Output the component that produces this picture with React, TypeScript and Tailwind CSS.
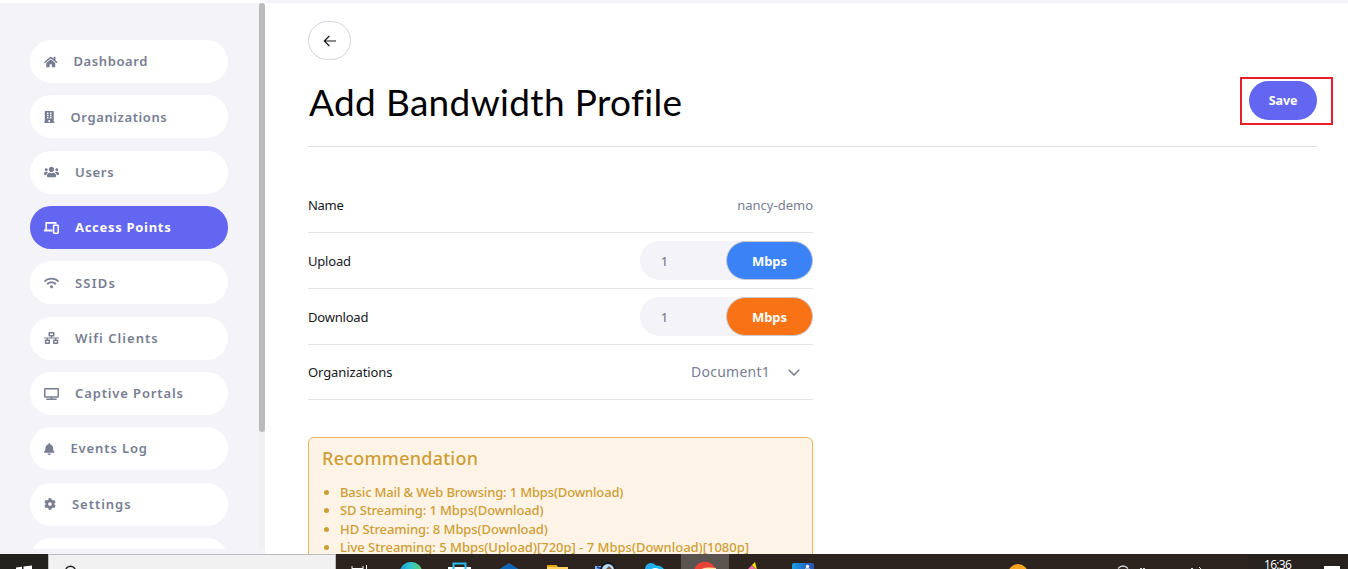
import type { ComponentType, ReactNode } from 'react';
import { FaHome, FaBuilding, FaUsers, FaWifi, FaNetworkWired, FaTv, FaBell, FaCog } from 'react-icons/fa';

function DevicesIcon({ className }: { className?: string }) {
  return (
    <svg viewBox="0 0 15 12" className={className} fill="none" stroke="currentColor" strokeWidth="1.6">
      <path d="M2.200 8V.9H11.700V2.400" />
      <path d="M0 8.500H8.500" strokeWidth="2" />
      <rect x="9.600" y="3.200" width="4.600" height="8" rx=".6" />
    </svg>
  );
}

type Item = { label: string; Icon: ComponentType<{ className?: string }>; icon: string; text: string; active?: boolean };

const items: Item[] = [
  { label: 'Dashboard', Icon: FaHome, icon: 'w-[13.5px]', text: 'tracking-[0.6px]' },
  { label: 'Organizations', Icon: FaBuilding, icon: 'w-[10.5px]', text: 'pt-px tracking-[0.6px]' },
  { label: 'Users', Icon: FaUsers, icon: 'w-[15px]', text: 'pt-px tracking-[0.7px]' },
  { label: 'Access Points', Icon: DevicesIcon, icon: 'w-[15px]', text: 'pt-px tracking-[0.7px] font-bold', active: true },
  { label: 'SSIDs', Icon: FaWifi, icon: 'w-[15px]', text: 'pt-px tracking-[1.2px]' },
  { label: 'Wifi Clients', Icon: FaNetworkWired, icon: 'w-[15px]', text: 'pt-px tracking-[1.05px]' },
  { label: 'Captive Portals', Icon: FaTv, icon: 'w-[15px]', text: 'tracking-[0.87px]' },
  { label: 'Events Log', Icon: FaBell, icon: 'w-[10.5px]', text: 'tracking-[0.87px]' },
  { label: 'Settings', Icon: FaCog, icon: 'w-[12px]', text: 'tracking-[0.97px]' },
];

function Sidebar() {
  return (
    <aside className="flex h-full w-[265px] shrink-0 bg-[#f3f3f8]">
      <nav className="flex h-[546px] w-[259px] flex-col gap-[12.35px] overflow-hidden pt-[37px] pl-[30px]">
        {items.map(({ label, Icon, icon, text, active }) => (
          <a
            key={label}
            className={`flex h-[43px] w-[198px] shrink-0 items-center gap-4 rounded-[21px] pl-[14px] text-[13px] font-semibold ${
              active ? 'bg-[#6366f1] text-white' : 'bg-white text-[#777d92]'
            }`}
          >
            <Icon className={`h-3 shrink-0 ${icon}`} />
            <span className={`whitespace-nowrap ${text}`}>{label}</span>
          </a>
        ))}
        <a className="h-[43px] w-[198px] shrink-0 rounded-[21px] bg-white" />
      </nav>
      <div className="h-[546px] w-[6px] bg-[#f1f1f1]">
        <div className="h-[429px] rounded-[3px] bg-[#bbbbbb]" />
      </div>
    </aside>
  );
}

function Row({ label, height, labelClass, children }: { label: string; height: string; labelClass: string; children: ReactNode }) {
  return (
    <div className={`flex items-center justify-between border-b border-[#e4e4e9] ${height}`}>
      <span className={`pt-[2px] text-[13px] text-[#17171c] ${labelClass}`}>{label}</span>
      {children}
    </div>
  );
}

function SpeedField({ color }: { color: string }) {
  return (
    <div className="flex h-[39px] w-[173px] items-start justify-between rounded-full bg-[#f3f3f8]">
      <span className="self-center pt-[2px] pl-[21px] text-[12px] font-medium text-[#777d92]">1</span>
      <span className={`flex h-[39px] w-[87px] items-center justify-center rounded-full border border-[#c8c9cd] pt-[2px] text-[13px] font-bold tracking-[-0.1px] text-white ${color}`}>
        Mbps
      </span>
    </div>
  );
}

function Taskbar() {
  return (
    <footer className="flex h-[15px] shrink-0 overflow-hidden bg-[#2d241f]">
      <div className="w-[48px] bg-[#24221e]">
        <svg className="h-[15px] w-[48px]" viewBox="0 0 48 15" fill="#fff">
          <path d="M16 13.500L22 12.700V16H16ZM23.500 12.500L32 11.500V16H23.500Z" />
        </svg>
      </div>
      <div className="w-[288px] border border-[#bdbdbd] border-b-0 bg-[#f1f1f1]">
        <svg className="h-[14px] w-[60px]" viewBox="0 0 60 14" fill="none" stroke="#222" strokeWidth="1.500">
          <circle cx="21.500" cy="16" r="4.800" />
        </svg>
      </div>
      <svg className="h-[15px] w-[912px]" viewBox="336 554 912 15">
        <defs>
          <linearGradient id="edge">
            <stop offset="0" stopColor="#1799dc" />
            <stop offset=".45" stopColor="#2fc3d2" />
            <stop offset="1" stopColor="#5ad46a" />
          </linearGradient>
          <linearGradient id="photo">
            <stop offset="0" stopColor="#169ee5" />
            <stop offset="1" stopColor="#2b50b5" />
          </linearGradient>
        </defs>
        <path d="M352 566V569M352 568.500H363M363 566V569M366.500 565V569" stroke="#fff" fill="none" />
        <circle cx="411" cy="573.500" r="11.500" fill="url(#edge)" />
        <rect x="443" y="567" width="23" height="3" fill="#fff" transform="translate(5 0)" />
        <path d="M453.500 569V563.500H465.500V569" stroke="#27bdf1" strokeWidth="2" fill="none" />
        <path d="M498 570L509 563L520 570Z" fill="#0f67b9" />
        <path d="M547 565H556L558 567H568V570H547Z" fill="#ffd15c" />
        <path d="M547 565H556L557 567H547Z" fill="#e7a500" />
        <path d="M595 566H609V570H595Z" fill="#7ebcf5" />
        <path d="M597 567L602 569L605 565" stroke="#3047a8" strokeWidth="2" fill="none" />
        <circle cx="608" cy="570" r="7" fill="#b7ddf5" stroke="#17191f" strokeWidth="2" />
        <path d="M606 569L609 566L612 569" fill="#75523d" />
        <circle cx="651" cy="569" r="6" fill="#22aef0" />
        <circle cx="657" cy="574" r="8.500" fill="#19baf0" />
        <path d="M651 569.500Q655 566.500 660 569.500Z" fill="#fff" />
        <rect x="681" y="554" width="48" height="15" fill="#5b534f" />
        <circle cx="705" cy="573" r="11.300" fill="#e84335" />
        <path d="M700 570Q704 566.500 716 568V570Z" fill="#ffe0a0" />
        <path d="M747 570L752 565L757 570Z" fill="#e56aa0" />
        <path d="M752 565L755 562L757 570Z" fill="#ffe600" />
        <rect x="792" y="563" width="22" height="10" rx="2" fill="url(#photo)" />
        <circle cx="807.500" cy="566.500" r="1.700" fill="#fff" />
        <path d="M805 569H810" stroke="#fff" />
        <circle cx="1018" cy="574" r="10" fill="#f7a51f" />
        <path d="M1118 568.500Q1123 563.500 1128 568.500" stroke="#d8d8d8" fill="none" strokeWidth="1.300" />
        <path d="M1140 568.500H1142M1143 568.500H1145M1191 568.500H1193M1199 567L1201 569" stroke="#ddd" />
      </svg>
      <div className="flex w-[100px] gap-[33px] bg-[#272220] pl-[16px]">
        <span className="mt-[3px] h-[12px] w-[27px] font-['Open_Sans',sans-serif] text-[12px] leading-[15px] tracking-[-0.7px] text-white">16:36</span>
        <span className="mt-[12px] h-[3px] w-[16px] bg-white" />
      </div>
    </footer>
  );
}

export default function App() {
  return (
    <div className="flex h-[569px] w-[1348px] flex-col overflow-hidden bg-white font-['Noto_Sans',sans-serif]">
      <div className="ml-[265px] h-[3px] shrink-0 bg-[#f3f3f8]" />
      <div className="flex h-[551px] shrink-0 overflow-hidden">
        <Sidebar />
        <main className="flex w-[1083px] flex-col pr-[15px] pl-[43px]">
          <button className="mt-[18px] flex h-[39px] w-[43px] shrink-0 items-center justify-center rounded-[20px] border border-[#d3d3de]">
            <svg className="h-[12px] w-[14px]" viewBox="0 0 14 12" fill="none" stroke="#17171c" strokeWidth="1.200">
              <path d="M13 6H1.500M6.300 1L1.300 6L6.300 11" />
            </svg>
          </button>
          <div className="mt-[17px] flex h-[48px] shrink-0 items-center justify-between">
            <h1 className="whitespace-nowrap pt-px pl-px font-[Lato,sans-serif] text-[37px] leading-[48px] tracking-[0.34px] text-black [font-variant-ligatures:none]">
              Add Bandwidth Profile
            </h1>
            <div className="flex h-[48px] w-[93px] items-start border-2 border-[#e71d27] pt-[2px] pl-[7px]">
              <button className="h-[39px] w-[68px] rounded-[20px] bg-[#6366f1] pt-[2px] text-[12.5px] font-bold tracking-[-0.1px] text-white">Save</button>
            </div>
          </div>
          <div className="mt-[21px] h-px w-[1009px] shrink-0 bg-[#dcdce6]" />
          <section className="mt-[31px] flex w-[505px] shrink-0 flex-col">
            <Row label="Name" height="h-[55px]" labelClass="tracking-[-0.3px]">
              <span className="pt-[2px] text-[13px] text-[#777d92]">nancy-demo</span>
            </Row>
            <Row label="Upload" height="h-[56px]" labelClass="tracking-[-0.2px]">
              <SpeedField color="bg-[#3b82f6]" />
            </Row>
            <Row label="Download" height="h-[56px]" labelClass="tracking-[-0.2px]">
              <SpeedField color="bg-[#f97316]" />
            </Row>
            <Row label="Organizations" height="h-[55px]" labelClass="tracking-[-0.1px]">
              <div className="flex items-center gap-[18px] pr-[13px] text-[#777d92]">
                <span className="pb-px text-[14px] tracking-[0.25px]">Document1</span>
                <svg className="h-[7px] w-[12px]" viewBox="0 0 12 7" fill="none" stroke="currentColor" strokeWidth="1.500">
                  <path d="M.7 .7L6 6L11.300 .7" />
                </svg>
              </div>
            </Row>
          </section>
          <section className="mt-[37px] h-[160px] w-[505px] shrink-0 rounded-[6px] border border-[#ebb956] bg-[#fdf4e7] px-[13px] pt-[7px] text-[#cf9d33]">
            <h2 className="text-[18px] leading-[26px] font-medium tracking-[0.25px]">Recommendation</h2>
            <ul className="mt-[12px] list-disc pl-[18px] text-[13px] leading-[18.4px] font-medium">
              <li><span className="tracking-[-0.16px]">Basic Mail &amp; Web Browsing: 1 Mbps(Download)</span></li>
              <li><span className="tracking-[-0.13px]">SD Streaming: 1 Mbps(Download)</span></li>
              <li><span className="tracking-[-0.07px]">HD Streaming: 8 Mbps(Download)</span></li>
              <li><span className="tracking-[-0.01px]">Live Streaming: 5 Mbps(Upload)[720p] - 7 Mbps(Download)[1080p]</span></li>
            </ul>
          </section>
        </main>
      </div>
      <Taskbar />
    </div>
  );
}
